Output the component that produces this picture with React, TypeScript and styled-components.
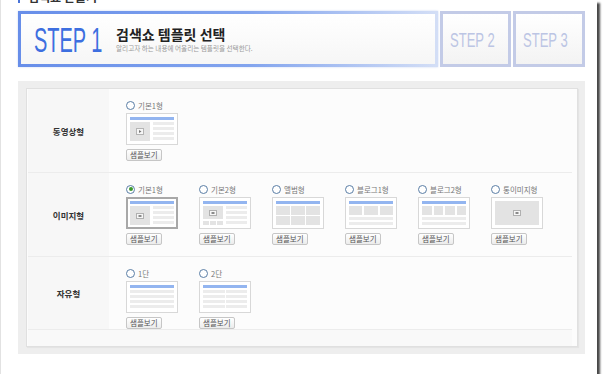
import React from "react";
import styled, { createGlobalStyle } from "styled-components";

const GlobalStyle = createGlobalStyle`
  body {
    margin: 0;
    background: #fff;
    font-family: "Noto Sans CJK KR", "Noto Sans", sans-serif;
  }
`;

const Window = styled.div`
  width: 597px;
  height: 374px;
  box-sizing: border-box;
  padding-left: 17px;
  background: #fff;
  border-left: 1px solid #e2e2e2;
  box-shadow: 3px 3px 2px rgba(40, 40, 40, 0.85);
  overflow: hidden;
`;

const PageTitle = styled.div`
  height: 3px;
  overflow: hidden;
  display: flex;
  align-items: flex-end;
  gap: 8px;
  font-size: 12px;
  line-height: 12px;
  font-weight: 700;
  color: #333;

  &::before {
    content: "";
    width: 2px;
    height: 12px;
    background: #4a74d8;
  }
`;

const StepBar = styled.div`
  display: flex;
  gap: 2px;
  margin-top: 8px;
  height: 56px;
`;

const CurrentStep = styled.div`
  width: 420px;
  box-sizing: border-box;
  border: 3px solid;
  border-image: linear-gradient(to right, #678ee9, #82a4ee 55%, #d3def6) 1;
  background: linear-gradient(to bottom, #fff, #f6f6f6);
  box-shadow: 0 0 2px #c9d6f2;
  display: flex;
  align-items: center;
  padding-left: 13px;
`;

const StepLabel = styled.div<{ $size: number; $scale: number; $color: string }>`
  font-family: "Liberation Sans", Arial, sans-serif;
  font-size: ${(p) => p.$size}px;
  line-height: 1;
  color: ${(p) => p.$color};
  white-space: nowrap;

  span {
    display: inline-block;
    transform: scaleX(${(p) => p.$scale});
    transform-origin: left center;
  }
`;

const StepOneLabel = styled(StepLabel)`
  width: 82px;
`;

const Heading = styled.div`
  display: flex;
  flex-direction: column;
`;

const HeadingTitle = styled.div`
  font-size: 14px;
  line-height: 16px;
  font-weight: 700;
  color: #222;
`;

const HeadingSub = styled.div`
  margin-top: 2px;
  font-size: 6.6px;
  line-height: 8px;
  color: #9a9a9a;
`;

const NextStep = styled.div<{ $width: number }>`
  width: ${(p) => p.$width}px;
  box-sizing: border-box;
  border: 3px solid #c3cbe7;
  background: linear-gradient(to bottom, #fff, #f3f3f3);
  display: flex;
  align-items: center;
  padding-left: 7px;
`;

const Panel = styled.div`
  margin-top: 14px;
  width: 567px;
  box-sizing: border-box;
  padding: 7px 7px 7px 8px;
  background: #eeeeee;
`;

const Sheet = styled.div`
  border: 1px solid #e0e0e0;
  background: #fcfcfc;
  padding: 0 5px 0 1px;
  box-shadow: 1px 1px 1px #e4e4e4;
`;

const Row = styled.div`
  display: grid;
  grid-template-columns: 81px 1fr;
  border-bottom: 1px solid #ececec;
`;

const RowLabel = styled.div`
  background: #f7f7f7;
  display: flex;
  align-items: center;
  justify-content: center;
  font-size: 8.5px;
  font-weight: 700;
  color: #333;
`;

const RowBody = styled.div<{ $last?: boolean }>`
  display: flex;
  padding: 11px 0 ${(p) => (p.$last ? 0 : 11)}px 17px;
`;

const Footer = styled.div`
  height: 16px;
  background: #f9f9f9;
`;

const Item = styled.div`
  flex: 0 0 73px;
  display: flex;
  flex-direction: column;
  align-items: flex-start;
`;

const Option = styled.label`
  display: flex;
  align-items: center;
  gap: 3px;
  height: 10px;
  font-size: 7.5px;
  color: #777;
`;

const Radio = styled.span<{ $checked?: boolean }>`
  width: 9px;
  height: 9px;
  box-sizing: border-box;
  border-radius: 50%;
  border: 1.5px solid #5a7ea6;
  background: #fff;
  display: flex;
  align-items: center;
  justify-content: center;

  &::after {
    content: "";
    width: 4px;
    height: 4px;
    border-radius: 50%;
    background: ${(p) => (p.$checked ? "#3c9a2c" : "transparent")};
  }
`;

const Thumb = styled.div<{ $selected?: boolean }>`
  margin-top: 3px;
  width: 52px;
  height: 32px;
  box-sizing: border-box;
  border: ${(p) => (p.$selected ? "2px solid #a8a8a8" : "1px solid #d8d8d8")};
  padding: ${(p) => (p.$selected ? 2 : 3)}px;
  background: #fff;
  display: flex;
  flex-direction: column;
  gap: 2px;
`;

const Bar = styled.div`
  height: 3px;
  background: #93b5f0;
  flex: none;
`;

const Split = styled.div`
  flex: 1;
  display: flex;
  gap: 3px;
`;

const Stack = styled.div<{ $width?: number }>`
  display: flex;
  flex-direction: column;
  gap: 2px;
  ${(p) => (p.$width ? `width: ${p.$width}px;` : "flex: 1;")}
`;

const Block = styled.div<{ $width?: number }>`
  background: #e3e3e3;
  display: flex;
  align-items: center;
  justify-content: center;
  ${(p) => (p.$width ? `flex: 0 0 ${p.$width}px;` : "flex: 1;")}
`;

const Line = styled.div`
  height: 3px;
  background: #ececec;
`;

const Tiles = styled.div<{ $cols: number; $rows: number; $rowHeight?: number; $gap?: number }>`
  display: grid;
  grid-template-columns: repeat(${(p) => p.$cols}, 1fr);
  grid-template-rows: repeat(${(p) => p.$rows}, ${(p) => (p.$rowHeight ? `${p.$rowHeight}px` : "1fr")});
  gap: ${(p) => p.$gap ?? 1}px;
  ${(p) => (p.$rowHeight ? "" : "flex: 1;")}
`;

const Pairs = styled.div`
  display: grid;
  grid-template-columns: 1fr 1fr;
  gap: 2px 1px;
`;

const SampleButton = styled.button`
  margin-top: 4px;
  height: 12px;
  padding: 0 3px;
  border: 1px solid #c6c6c6;
  border-radius: 2px;
  background: linear-gradient(to bottom, #fff, #ececec);
  font-family: inherit;
  font-size: 7.5px;
  line-height: 10px;
  color: #555;
  display: flex;
  align-items: center;
`;

type Layout = "basic1" | "basic2" | "album" | "blog1" | "blog2" | "full" | "col1" | "col2";

interface OptionData {
  label: string;
  layout: Layout;
  checked?: boolean;
}

interface Group {
  title: string;
  options: OptionData[];
}

const groups: Group[] = [
  { title: "동영상형", options: [{ label: "기본1형", layout: "basic1" }] },
  {
    title: "이미지형",
    options: [
      { label: "기본1형", layout: "basic1", checked: true },
      { label: "기본2형", layout: "basic2" },
      { label: "앨범형", layout: "album" },
      { label: "블로그1형", layout: "blog1" },
      { label: "블로그2형", layout: "blog2" },
      { label: "통이미지형", layout: "full" },
    ],
  },
  {
    title: "자유형",
    options: [
      { label: "1단", layout: "col1" },
      { label: "2단", layout: "col2" },
    ],
  },
];

const PlayIcon = () => (
  <svg width="8" height="7" viewBox="0 0 8 7">
    <rect x="0.5" y="0.5" width="7" height="6" fill="#f6f6f6" stroke="#b4b4b4" />
    <path d="M3 2 L5.5 3.5 L3 5 Z" fill="#777" />
  </svg>
);

const ImageIcon = () => (
  <svg width="8" height="6" viewBox="0 0 8 6">
    <rect x="0.5" y="0.5" width="7" height="5" fill="#f6f6f6" stroke="#b0b0b0" />
    <rect x="2.5" y="2" width="3" height="2" fill="#8a8a8a" />
  </svg>
);

const lines = (n: number) => Array.from({ length: n }, (_, i) => <Line key={i} />);
const tiles = (n: number) => Array.from({ length: n }, (_, i) => <Block key={i} />);

const Preview: React.FC<{ layout: Layout; video: boolean }> = ({ layout, video }) => {
  const icon = video ? <PlayIcon /> : <ImageIcon />;
  switch (layout) {
    case "basic1":
      return (
        <>
          <Bar />
          <Split>
            <Block $width={20}>{icon}</Block>
            <Stack>{lines(4)}</Stack>
          </Split>
        </>
      );
    case "basic2":
      return (
        <>
          <Bar />
          <Split>
            <Stack $width={20}>
              <Block>{icon}</Block>
              <Tiles $cols={3} $rows={1} $rowHeight={4}>
                {tiles(3)}
              </Tiles>
            </Stack>
            <Stack>{lines(4)}</Stack>
          </Split>
        </>
      );
    case "album":
      return (
        <>
          <Bar />
          <Tiles $cols={3} $rows={2}>
            {tiles(6)}
          </Tiles>
        </>
      );
    case "blog1":
    case "blog2":
      return (
        <>
          <Bar />
          <Tiles $cols={layout === "blog1" ? 3 : 4} $rows={1} $rowHeight={9} $gap={2}>
            {tiles(layout === "blog1" ? 3 : 4)}
          </Tiles>
          {lines(2)}
        </>
      );
    case "full":
      return <Block>{icon}</Block>;
    case "col1":
      return (
        <>
          <Bar />
          {lines(4)}
        </>
      );
    case "col2":
      return (
        <>
          <Bar />
          <Pairs>{lines(8)}</Pairs>
        </>
      );
  }
};

export default function App() {
  return (
    <>
      <GlobalStyle />
      <Window>
        <PageTitle>검색쇼 만들기</PageTitle>
        <StepBar>
          <CurrentStep>
            <StepOneLabel $size={35} $scale={0.57} $color="#3d6fe0">
              <span>STEP 1</span>
            </StepOneLabel>
            <Heading>
              <HeadingTitle>검색쇼 템플릿 선택</HeadingTitle>
              <HeadingSub>알리고자 하는 내용에 어울리는 템플릿을 선택한다.</HeadingSub>
            </Heading>
          </CurrentStep>
          <NextStep $width={71}>
            <StepLabel $size={21} $scale={0.62} $color="#bcc5e4">
              <span>STEP 2</span>
            </StepLabel>
          </NextStep>
          <NextStep $width={72}>
            <StepLabel $size={21} $scale={0.62} $color="#bcc5e4">
              <span>STEP 3</span>
            </StepLabel>
          </NextStep>
        </StepBar>
        <Panel>
          <Sheet>
            {groups.map((group, gi) => (
              <Row key={group.title}>
                <RowLabel>{group.title}</RowLabel>
                <RowBody $last={gi === groups.length - 1}>
                  {group.options.map((opt) => (
                    <Item key={opt.label}>
                      <Option>
                        <Radio $checked={opt.checked} />
                        {opt.label}
                      </Option>
                      <Thumb $selected={opt.checked}>
                        <Preview layout={opt.layout} video={gi === 0} />
                      </Thumb>
                      <SampleButton>샘플보기</SampleButton>
                    </Item>
                  ))}
                </RowBody>
              </Row>
            ))}
            <Footer />
          </Sheet>
        </Panel>
      </Window>
    </>
  );
}
